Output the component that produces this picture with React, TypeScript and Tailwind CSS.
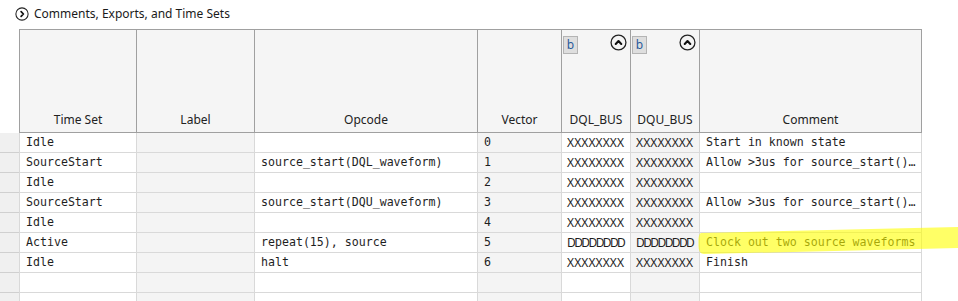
import React from 'react';

const cols = [
  { name: 'Time Set', shade: false },
  { name: 'Label', shade: true },
  { name: 'Opcode', shade: false },
  { name: 'Vector', shade: true },
  { name: 'DQL_BUS', shade: false, pin: true },
  { name: 'DQU_BUS', shade: true, pin: true },
  { name: 'Comment', shade: false },
];

const rows = [
  ['Idle', '', '', '0', 'XXXXXXXX', 'XXXXXXXX', 'Start in known state'],
  ['SourceStart', '', 'source_start(DQL_waveform)', '1', 'XXXXXXXX', 'XXXXXXXX', 'Allow >3us for source_start()…'],
  ['Idle', '', '', '2', 'XXXXXXXX', 'XXXXXXXX', ''],
  ['SourceStart', '', 'source_start(DQU_waveform)', '3', 'XXXXXXXX', 'XXXXXXXX', 'Allow >3us for source_start()…'],
  ['Idle', '', '', '4', 'XXXXXXXX', 'XXXXXXXX', ''],
  ['Active', '', 'repeat(15), source', '5', 'DDDDDDDD', 'DDDDDDDD', 'Clock out two source waveforms'],
  ['Idle', '', 'halt', '6', 'XXXXXXXX', 'XXXXXXXX', 'Finish'],
  ['', '', '', '', '', '', ''],
  ['', '', '', '', '', '', ''],
];

const ui = "font-['Noto_Sans','Open_Sans',sans-serif]";
const mono = "font-['DejaVu_Sans_Mono','Liberation_Mono',monospace]";

function CircleChevron({ dir, size }: { dir: 'up' | 'right'; size: number }) {
  return (
    <svg width={size} height={size} viewBox="0 0 16 16" className="shrink-0">
      <circle cx="8" cy="8" r="7" fill="none" stroke="#222" strokeWidth="1.2" />
      {dir === 'up' ? (
        <path d="M5.4 9.3 L8 6.7 L10.6 9.3" fill="none" stroke="#111" strokeWidth="2" strokeLinecap="round" strokeLinejoin="round" />
      ) : (
        <path d="M7 5.4 L9.6 8 L7 10.6" fill="none" stroke="#111" strokeWidth="2" strokeLinecap="round" strokeLinejoin="round" />
      )}
    </svg>
  );
}

function BodyCell({ value, col, last }: { value: string; col: number; last: boolean }) {
  const shade = cols[col].shade;
  const bus = col === 4 || col === 5;
  return (
    <div
      className={
        'h-[20px] border-l border-b border-[#d9d9d9] flex items-center pt-[1px] overflow-hidden whitespace-nowrap text-[#1e1e1e] ' +
        (shade ? 'bg-[#f4f4f4] ' : 'bg-white ') +
        (last ? 'border-r ' : '') +
        (bus ? ui + ' text-[12px] pl-[5px] ' : mono + ' text-[11.6px] pl-[6px] ')
      }
    >
      <span className={value.startsWith('D') && bus ? 'tracking-[-1.6px]' : bus ? 'tracking-[0.1px]' : ''}>{value}</span>
    </div>
  );
}

export default function App() {
  return (
    <div className={'relative w-[958px] h-[301px] overflow-hidden bg-white ' + ui}>
      <div className="h-[29px] flex items-center pl-[15px] gap-[5px] pb-[2px]">
        <CircleChevron dir="right" size={14} />
        <span className="text-[12px] text-[#1a1a1a]">Comments, Exports, and Time Sets</span>
      </div>

      <div className="grid grid-cols-[19px_117px_118px_223px_84px_69px_69px_223px] w-[922px]">
        <div className="h-[104px] bg-white" />
        {cols.map((c, i) => (
          <div
            key={c.name}
            className={
              'h-[104px] bg-[#f5f5f5] border-t border-b border-l border-[#a0a0a0] flex flex-col justify-between items-stretch pb-[4px] ' +
              (i === cols.length - 1 ? 'border-r' : '')
            }
          >
            {c.pin ? (
              <div className="flex justify-between items-start pl-[1px] pr-[3px] pt-[4px]">
                <div className="w-[15px] h-[18px] mt-[2px] bg-[#dedede] border border-[#b4b4b4] text-[12px] text-[#2a5a9a] flex items-center justify-center leading-none">
                  b
                </div>
                <CircleChevron dir="up" size={17} />
              </div>
            ) : (
              <div />
            )}
            <div className="text-[12px] text-[#222] text-center leading-[16px]">{c.name}</div>
          </div>
        ))}

        {rows.map((r, ri) => (
          <React.Fragment key={ri}>
            <div className="h-[20px] bg-[#f0f0f0] border-b border-[#d0d0d0]" />
            {r.map((v, ci) => (
              <BodyCell key={ci} value={v} col={ci} last={ci === r.length - 1} />
            ))}
          </React.Fragment>
        ))}
      </div>

      <svg className="absolute left-[697px] top-[225px] pointer-events-none" width="261" height="32" viewBox="0 0 261 32">
        <path d="M4 8 L261 2 L261 23 L7 29 Q1 29 1.5 19 Q1 9 4 8 Z" fill="#ffff00" fillOpacity="0.6" />
      </svg>
    </div>
  );
}
